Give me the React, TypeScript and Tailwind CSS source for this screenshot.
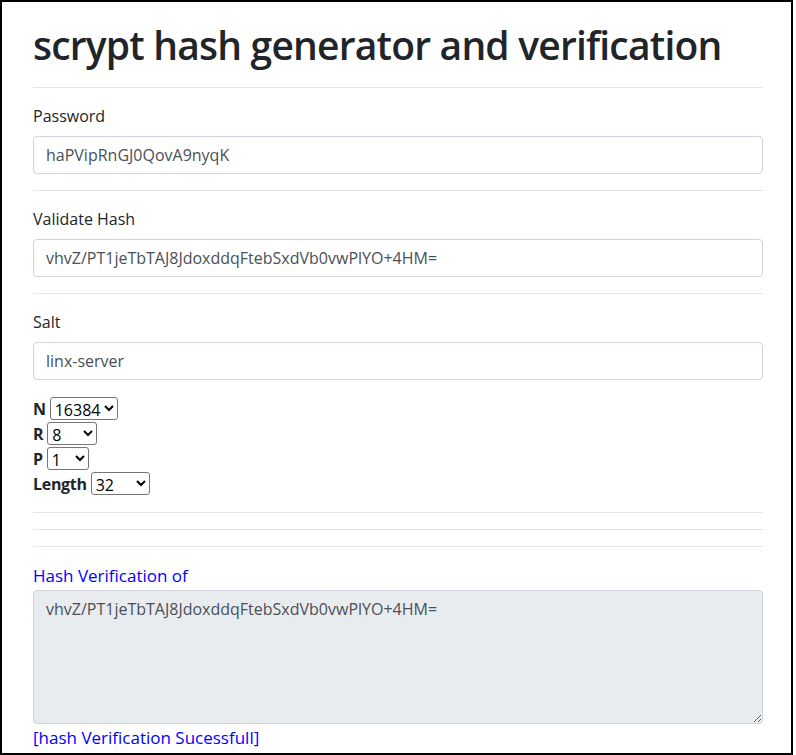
import { useState } from "react";

const hash = "vhvZ/PT1jeTbTAJ8JdoxddqFtebSxdVb0vwPlYO+4HM=";

function Field({ label, value }: { label: string; value: string }) {
  return (
    <div className="mb-4">
      <label className="block mb-2 leading-6">{label}</label>
      <input
        className="block w-full h-[38px] px-3 border border-[#ced4da] rounded-[4px] text-[#495057] leading-6"
        value={value}
        readOnly
      />
    </div>
  );
}

function Param({
  label,
  value,
  options,
  width,
}: {
  label: string;
  value: string;
  options: string[];
  width: string;
}) {
  return (
    <div className="flex items-center gap-1 h-[25px]">
      <b className="font-bold tracking-[-0.3px]">{label}</b>
      <select
        className={`h-[23px] border border-[#767676] rounded-[3px] text-black bg-white ${width}`}
        defaultValue={value}
      >
        {options.map((o) => (
          <option key={o}>{o}</option>
        ))}
      </select>
    </div>
  );
}

export default function App() {
  const [password] = useState("haPVipRnGJ0QovA9nyqK");

  return (
    <div className="w-[793px] h-[755px] border-2 border-black bg-white overflow-hidden text-[#212529] text-base font-['Open_Sans',sans-serif]">
      <div className="pl-[31px] pr-[28px]">
        <h1 className="text-[39px] tracking-[-0.8px] whitespace-nowrap font-semibold leading-[48px] pt-[19px] pb-[2px]">
          scrypt hash generator and verification
        </h1>
        <hr className="my-4 border-t border-[#e5e5e5]" />
        <Field label="Password" value={password} />
        <hr className="my-4 border-t border-[#e5e5e5]" />
        <Field label="Validate Hash" value={hash} />
        <hr className="my-4 border-t border-[#e5e5e5]" />
        <Field label="Salt" value="linx-server" />

        <div className="flex flex-col">
          <Param label="N" value="16384" options={["1024", "2048", "4096", "8192", "16384", "32768"]} width="w-[68px]" />
          <Param label="R" value="8" options={["1", "2", "4", "8", "16"]} width="w-[50px]" />
          <Param label="P" value="1" options={["1", "2", "4"]} width="w-[42px]" />
          <Param label="Length" value="32" options={["16", "32", "64", "128"]} width="w-[59px]" />
        </div>

        <hr className="mt-4 mb-4 border-t border-[#e5e5e5]" />
        <hr className="my-4 border-t border-[#e5e5e5]" />
        <hr className="my-4 border-t border-[#e5e5e5]" />

        <label className="block mb-[1px] text-[17px] leading-[26px] text-[#0000ff]">Hash Verification of</label>
        <textarea
          className="block w-full h-[134px] px-3 py-[6px] border border-[#ced4da] rounded-[4px] bg-[#e9ecef] text-[#495057] leading-6"
          value={hash}
          readOnly
        />
        <div className="text-[17px] leading-7 text-[#0000ff]">[hash Verification Sucessfull]</div>
      </div>
    </div>
  );
}
